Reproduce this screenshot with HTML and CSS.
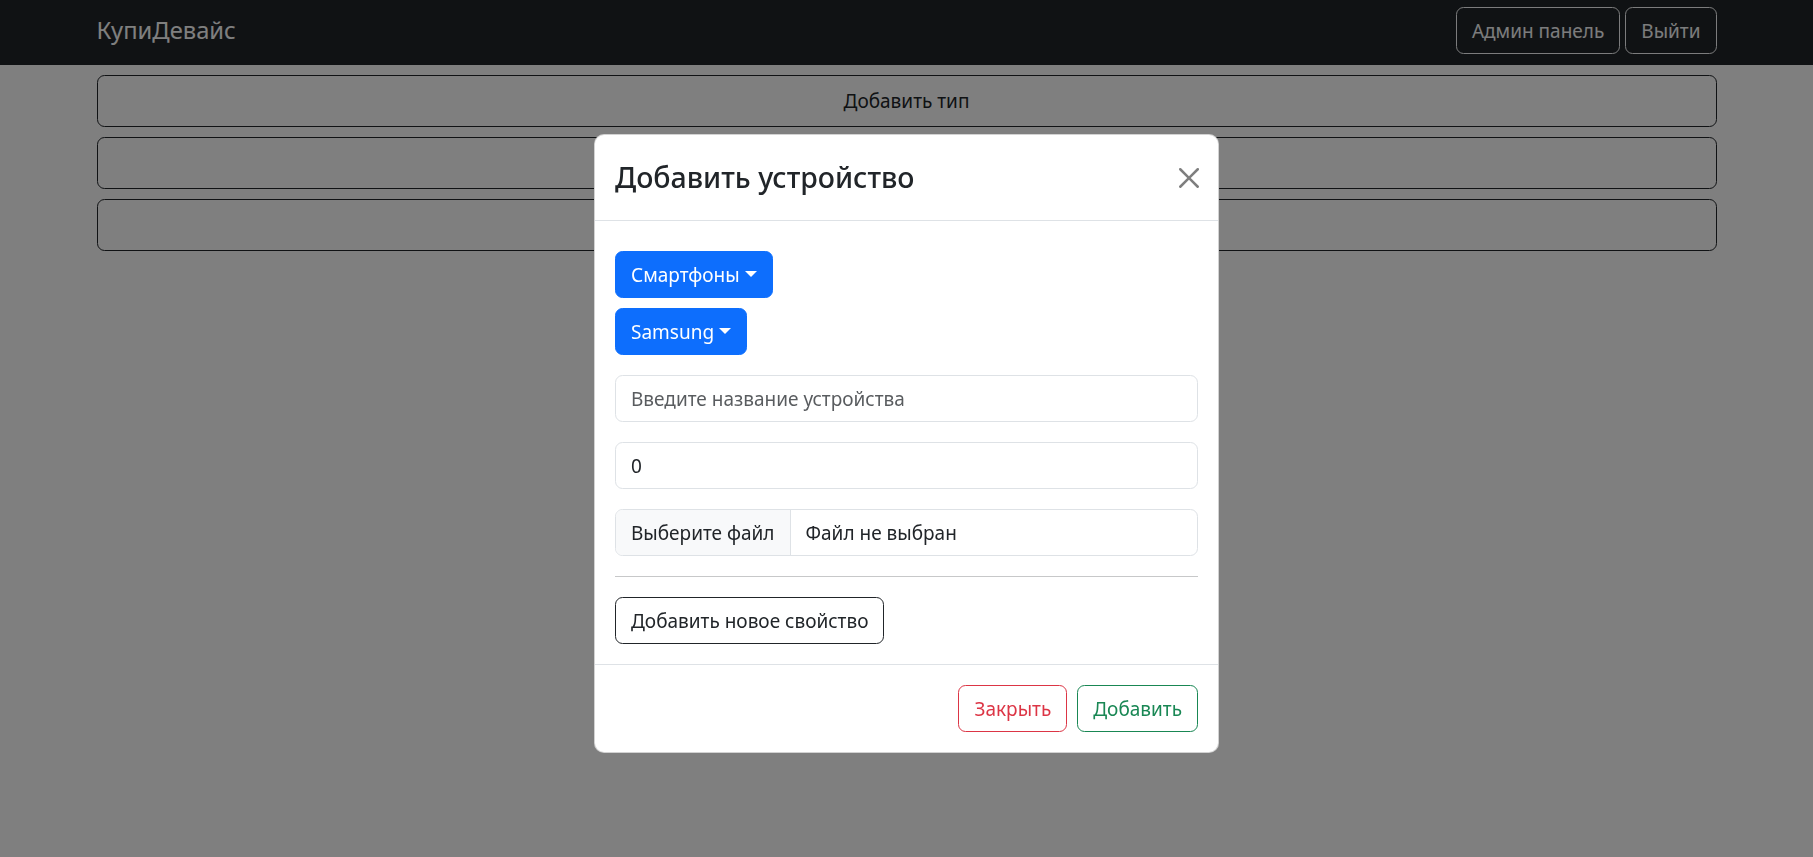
FILE: index.html
```html
<!DOCTYPE html>
<html lang="ru">
<head>
<meta charset="utf-8">
<title>КупиДевайс</title>
<link rel="stylesheet" href="styles.css">
</head>
<body>
<nav class="navbar">
  <div class="container nav-inner">
    <a class="brand" href="#">КупиДевайс</a>
    <div class="nav-actions">
      <button class="btn btn-outline-light">Админ панель</button>
      <button class="btn btn-outline-light">Выйти</button>
    </div>
  </div>
</nav>
<main class="container admin">
  <button class="btn btn-outline-dark btn-row">Добавить тип</button>
  <button class="btn btn-outline-dark btn-row">Добавить бренд</button>
  <button class="btn btn-outline-dark btn-row">Добавить устройство</button>
</main>
<div class="backdrop"></div>
<div class="modal">
  <div class="modal-dialog">
    <div class="modal-content">
      <div class="modal-header">
        <h4 class="modal-title">Добавить устройство</h4>
        <button class="btn-close" aria-label="Close">
          <svg viewBox="0 0 16 16" width="20" height="20"><path d="M.293.293a1 1 0 0 1 1.414 0L8 6.586 14.293.293a1 1 0 1 1 1.414 1.414L9.414 8l6.293 6.293a1 1 0 0 1-1.414 1.414L8 9.414l-6.293 6.293a1 1 0 0 1-1.414-1.414L6.586 8 .293 1.707a1 1 0 0 1 0-1.414z"/></svg>
        </button>
      </div>
      <div class="modal-body">
        <div class="dropdown"><button class="btn btn-primary dropdown-toggle">Смартфоны</button></div>
        <div class="dropdown"><button class="btn btn-primary dropdown-toggle">Samsung</button></div>
        <input class="form-control" type="text" placeholder="Введите название устройства">
        <input class="form-control" type="text" value="0">
        <div class="form-control file-input">
          <span class="file-btn">Выберите файл</span>
          <span class="file-name">Файл не выбран</span>
        </div>
        <hr class="divider">
        <button class="btn btn-outline-dark">Добавить новое свойство</button>
      </div>
      <div class="modal-footer">
        <button class="btn btn-outline-danger">Закрыть</button>
        <button class="btn btn-outline-success">Добавить</button>
      </div>
    </div>
  </div>
</div>
</body>
</html>
```
FILE: styles.css
```css
* { box-sizing: border-box; }
html, body { margin: 0; }
body {
  font-family: "Noto Sans", "Open Sans", sans-serif;
  font-size: 19px;
  line-height: 30px;
  color: #212529;
  background: #fff;
}
.container {
  max-width: 1650px;
  margin: 0 auto;
  padding: 0 15px;
}
.navbar {
  background: #212529;
  padding: 7px 0 11px;
}
.nav-inner {
  display: flex;
  align-items: center;
  justify-content: space-between;
}
.brand {
  font-size: 23.75px;
  line-height: 37.5px;
  color: #fff;
  text-decoration: none;
}
.nav-actions {
  display: flex;
  gap: 5px;
}
.btn {
  display: inline-block;
  font-family: inherit;
  font-size: 19px;
  line-height: 30px;
  padding: 7.5px 15px;
  border: 1px solid transparent;
  border-radius: 7.5px;
  background: transparent;
  color: #212529;
  cursor: pointer;
}
.btn-outline-light { color: #f8f9fa; border-color: #f8f9fa; }
.btn-outline-dark { color: #212529; border-color: #212529; }
.btn-outline-danger { color: #dc3545; border-color: #dc3545; }
.btn-outline-success { color: #198754; border-color: #198754; }
.btn-primary { color: #fff; background: #0d6efd; border-color: #0d6efd; }
.admin {
  display: flex;
  flex-direction: column;
  gap: 10px;
  padding-top: 10px;
}
.btn-row {
  width: 100%;
  padding: 10px 15px;
}
.backdrop {
  position: fixed;
  inset: 0;
  background: rgba(0, 0, 0, 0.5);
}
.modal {
  position: fixed;
  inset: 0;
}
.modal-dialog {
  width: 625px;
  margin: 134px auto 0;
}
.modal-content {
  background: #fff;
  border: 1px solid rgba(0, 0, 0, 0.175);
  border-radius: 10px;
}
.modal-header {
  display: flex;
  align-items: center;
  justify-content: space-between;
  padding: 20px;
  border-bottom: 1px solid #dee2e6;
}
.modal-title {
  margin: 0;
  font-size: 28.5px;
  line-height: 45px;
  font-weight: 500;
  color: #212529;
}
.btn-close {
  width: 20px;
  height: 20px;
  padding: 0;
  margin-right: -1px;
  border: 0;
  background: none;
  opacity: 0.5;
  display: flex;
}
.btn-close svg { fill: #000; }
.modal-body {
  padding: 20px;
}
.dropdown {
  margin: 10px 0;
}
.dropdown-toggle::after {
  content: "";
  display: inline-block;
  margin-left: 5px;
  vertical-align: 5px;
  border-top: 6px solid;
  border-right: 6px solid transparent;
  border-left: 6px solid transparent;
  border-bottom: 0;
}
.form-control {
  display: block;
  width: 100%;
  margin: 20px 0 0;
  padding: 7.5px 15px;
  font-family: inherit;
  font-size: 19px;
  line-height: 30px;
  color: #212529;
  background: #fff;
  border: 1px solid #dee2e6;
  border-radius: 7.5px;
  outline: none;
}
.form-control::placeholder { color: rgba(33, 37, 41, 0.75); }
.file-input {
  display: flex;
  padding: 0;
  overflow: hidden;
}
.file-btn {
  padding: 7.5px 15px;
  background: #f8f9fa;
  border-right: 1px solid #dee2e6;
}
.file-name {
  padding: 7.5px 15px;
}
.divider {
  margin: 20px 0;
  border: 0;
  border-top: 1px solid #212529;
  opacity: 0.25;
}
.modal-footer {
  display: flex;
  justify-content: flex-end;
  padding: 15px;
  border-top: 1px solid #dee2e6;
}
.modal-footer .btn { margin: 5px; }
```
